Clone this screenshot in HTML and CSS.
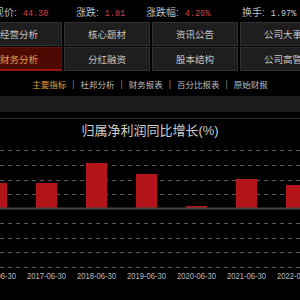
FILE: index.html
```html
<!DOCTYPE html>
<html lang="zh-CN">
<head>
    <meta charset="UTF-8">
    <meta name="viewport" content="width=device-width, initial-scale=1.0">
    <title>财务分析</title>
    <link rel="stylesheet" href="styles.css">
</head>
<body>
    <div class="quote">
        <div class="quote-item"><span class="quote-label">现价:</span><span class="quote-val up">44.30</span></div>
        <div class="quote-item"><span class="quote-label">涨跌:</span><span class="quote-val up">1.81</span></div>
        <div class="quote-item"><span class="quote-label">涨跌幅:</span><span class="quote-val up">4.26%</span></div>
        <div class="quote-item"><span class="quote-label">换手:</span><span class="quote-val">1.97%</span></div>
    </div>

    <div class="menu">
        <div class="menu-cell">经营分析</div>
        <div class="menu-cell">核心题材</div>
        <div class="menu-cell">资讯公告</div>
        <div class="menu-cell">公司大事</div>
        <div class="menu-cell active">财务分析</div>
        <div class="menu-cell">分红融资</div>
        <div class="menu-cell">股本结构</div>
        <div class="menu-cell">公司高管</div>
    </div>

    <div class="tabs">
        <span class="tab current">主要指标</span>
        <span class="sep">|</span>
        <span class="tab">杜邦分析</span>
        <span class="sep">|</span>
        <span class="tab">财务报表</span>
        <span class="sep">|</span>
        <span class="tab">百分比报表</span>
        <span class="sep">|</span>
        <span class="tab">原始财报</span>
    </div>

    <div class="toolbar"></div>

    <div class="chart">
        <h2 class="chart-title">归属净利润同比增长(%)</h2>
        <svg class="chart-svg" width="300" height="157" viewBox="0 0 300 157">
            <!-- grid -->
            <g class="grid">
                <line x1="0" y1="8.5" x2="300" y2="8.5"/>
                <line x1="0" y1="23.5" x2="300" y2="23.5"/>
                <line x1="0" y1="38.5" x2="300" y2="38.5"/>
                <line x1="0" y1="52.5" x2="300" y2="52.5"/>
                <line x1="0" y1="81.5" x2="300" y2="81.5"/>
                <line x1="0" y1="96.5" x2="300" y2="96.5"/>
                <line x1="0" y1="110.5" x2="300" y2="110.5"/>
                <line x1="0" y1="125.5" x2="300" y2="125.5"/>
            </g>
            <!-- bars -->
            <g class="bars">
                <rect x="-14" y="41" width="21" height="25"/>
                <rect x="36" y="41" width="21" height="25"/>
                <rect x="86" y="21" width="21" height="45"/>
                <rect x="136" y="32" width="21" height="34"/>
                <rect x="186" y="64" width="21" height="2"/>
                <rect x="236" y="37" width="21" height="29"/>
                <rect x="286" y="43" width="21" height="23"/>
            </g>
            <line class="axis" x1="0" y1="66.5" x2="300" y2="66.5"/>
            <!-- labels -->
            <g class="labels">
                <text x="-23" y="137" textLength="39" lengthAdjust="spacingAndGlyphs">2016-06-30</text>
                <text x="27" y="137" textLength="39" lengthAdjust="spacingAndGlyphs">2017-06-30</text>
                <text x="77" y="137" textLength="39" lengthAdjust="spacingAndGlyphs">2018-06-30</text>
                <text x="127" y="137" textLength="39" lengthAdjust="spacingAndGlyphs">2019-06-30</text>
                <text x="177" y="137" textLength="39" lengthAdjust="spacingAndGlyphs">2020-06-30</text>
                <text x="227" y="137" textLength="39" lengthAdjust="spacingAndGlyphs">2021-06-30</text>
                <text x="277" y="137" textLength="39" lengthAdjust="spacingAndGlyphs">2022-06-30</text>
            </g>
        </svg>
    </div>
</body>
</html>
```

FILE: styles.css
```css
body {
    margin: 0;
    width: 300px;
    height: 300px;
    overflow: hidden;
    background: #000;
    color: #bbb;
    font-family: "Liberation Sans", "Noto Sans CJK SC", sans-serif;
}

/* quote line */
.quote {
    display: grid;
    grid-template-columns: 82px 70px 96px auto;
    height: 22px;
    align-items: center;
    margin-left: -6px;
    font-size: 10px;
    white-space: nowrap;
}
.quote-label {
    color: #bdbdbd;
}
.quote-val {
    margin-left: 6px;
    font-family: "Liberation Mono", monospace;
    font-size: 8.5px;
    color: #c8c8c8;
}
.quote-val.up {
    color: #d0404e;
}

/* menu grid */
.menu {
    display: grid;
    grid-template-columns: repeat(4, 86px);
    grid-auto-rows: 24px;
    gap: 1px 2px;
    margin-left: -24px;
}
.menu-cell {
    display: flex;
    align-items: center;
    justify-content: center;
    background: #1e1e1e;
    border: 1px solid #303030;
    box-sizing: border-box;
    font-size: 9.5px;
    color: #c4c4c4;
}
.menu-cell.active {
    background: #4c0a02;
    border-color: #5e1208;
    border-bottom: 2px solid #9c1410;
    color: #e4a25a;
}

/* tabs */
.tabs {
    display: flex;
    justify-content: center;
    align-items: center;
    gap: 6px;
    height: 25px;
    font-size: 8.5px;
    color: #bdbdbd;
}
.tab.current {
    color: #d9a040;
}
.sep {
    color: #8a8a8a;
}

.toolbar {
    height: 16px;
    background: #1c1c1c;
}

/* chart */
.chart {
    margin-top: 6px;
    border-top: 1px solid #2c2c2c;
}
.chart-title {
    margin: 0;
    height: 23px;
    line-height: 23px;
    text-align: center;
    font-size: 13px;
    font-weight: normal;
    color: #cfcfcf;
}
.chart-svg {
    display: block;
}
.grid line {
    stroke: #5c5c5c;
    stroke-width: 1;
    stroke-dasharray: 4 4;
}
.axis {
    stroke: #444;
    stroke-width: 2;
}
.bars rect {
    fill: #b3151b;
}
.labels text {
    fill: #bdbdbd;
    font-size: 9px;
    font-family: "Liberation Sans", sans-serif;
}
```
